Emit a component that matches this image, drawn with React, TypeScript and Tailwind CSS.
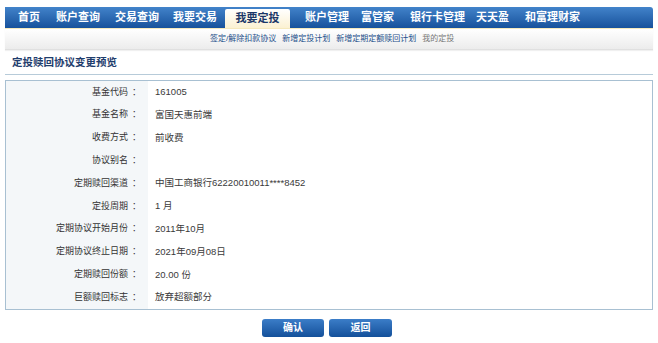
const navItems: [string, number][] = [
  ["首页", 0],
  ["账户查询", 16],
  ["交易查询", 15],
  ["我要交易", 14],
  ["我要定投", 8],
  ["账户管理", 15],
  ["富管家", 12],
  ["银行卡管理", 16],
  ["天天盈", 11],
  ["和富理财家", 16],
]

const rows: [string, string][] = [
  ["基金代码", "161005"],
  ["基金名称", "富国天惠前端"],
  ["收费方式", "前收费"],
  ["协议别名", ""],
  ["定期赎回渠道", "中国工商银行62220010011****8452"],
  ["定投周期", "1 月"],
  ["定期协议开始月份", "2011年10月"],
  ["定期协议终止日期", "2021年09月08日"],
  ["定期赎回份额", "20.00 份"],
  ["巨额赎回标志", "放弃超额部分"],
]

const marginClass: Record<number, string> = {
  0: "ml-0",
  8: "ml-[8px]",
  11: "ml-[11px]",
  12: "ml-[12px]",
  14: "ml-[14px]",
  15: "ml-[15px]",
  16: "ml-[16px]",
}

export default function App() {
  return (
    <div
      className="w-[658px] h-[343px] bg-white text-[9px] text-[#333]"
      style={{ fontFamily: '"Liberation Sans", "Noto Sans CJK SC", sans-serif' }}
    >
      <div className="pt-[7px] px-[5px]">
        {/* main nav */}
        <div className="h-[21px] flex items-end pl-[13px] bg-gradient-to-b from-[#4283ca] to-[#17529c] rounded-tr-[3px] whitespace-nowrap">
          {navItems.map(([item, ml]) =>
            item === "我要定投" ? (
              <div
                key={item}
                className={`${marginClass[ml]} h-[19px] w-[65px] shrink-0 flex items-center justify-center font-bold text-[11px] text-[#1b3768] bg-gradient-to-b from-white to-[#fbf1d2] rounded-t-[2px]`}
              >
                {item}
              </div>
            ) : (
              <div
                key={item}
                className={`${marginClass[ml]} h-[21px] shrink-0 flex items-center font-bold text-[11px] text-white`}
              >
                {item}
              </div>
            )
          )}
        </div>
        {/* sub nav */}
        <div className="h-[22px] flex items-center pl-[205px] gap-[6px] text-[8px] whitespace-nowrap bg-gradient-to-b from-white to-[#ececec] border-t border-[#f5e9bd] border-b border-b-[#e0e0e0] shadow-[0_1px_1px_rgba(0,0,0,0.06)]">
          <span className="text-[#1c4f8a]">签定/解除扣款协议</span>
          <span className="text-[#1c4f8a]">新增定投计划</span>
          <span className="text-[#1c4f8a]">新增定期定额赎回计划</span>
          <span className="text-[#777]">我的定投</span>
        </div>
      </div>

      {/* title */}
      <div className="mx-[5px] mt-[2px] h-[23px] flex items-center pl-[7px] border-b border-[#b7cbd9] font-bold text-[10.5px] text-[#1f3d6d]">
        定投赎回协议变更预览
      </div>

      {/* detail box */}
      <div className="mx-[5px] mt-[5px] border border-[#a8c0d2]">
        {rows.map(([label, value]) => (
          <div key={label} className="flex h-[22.8px]">
            <div className="w-[142px] shrink-0 bg-[#f4f7f9] flex items-center justify-end pr-[7px]">
              <span>{label}</span>
              <span className="ml-[4px]">：</span>
            </div>
            <div className="flex items-center pl-[7px] text-[9.5px] text-[#3a3a3a]">{value}</div>
          </div>
        ))}
      </div>

      {/* buttons */}
      <div className="flex justify-center gap-[5px] mt-[9px] pr-[4px]">
        <button className="w-[62px] h-[18px] rounded-[3px] bg-gradient-to-b from-[#3b7dc8] to-[#13509a] text-white font-bold text-[10px] flex items-center justify-center">
          确认
        </button>
        <button className="w-[63px] h-[18px] rounded-[3px] bg-gradient-to-b from-[#3b7dc8] to-[#13509a] text-white font-bold text-[10px] flex items-center justify-center">
          返回
        </button>
      </div>
    </div>
  )
}
